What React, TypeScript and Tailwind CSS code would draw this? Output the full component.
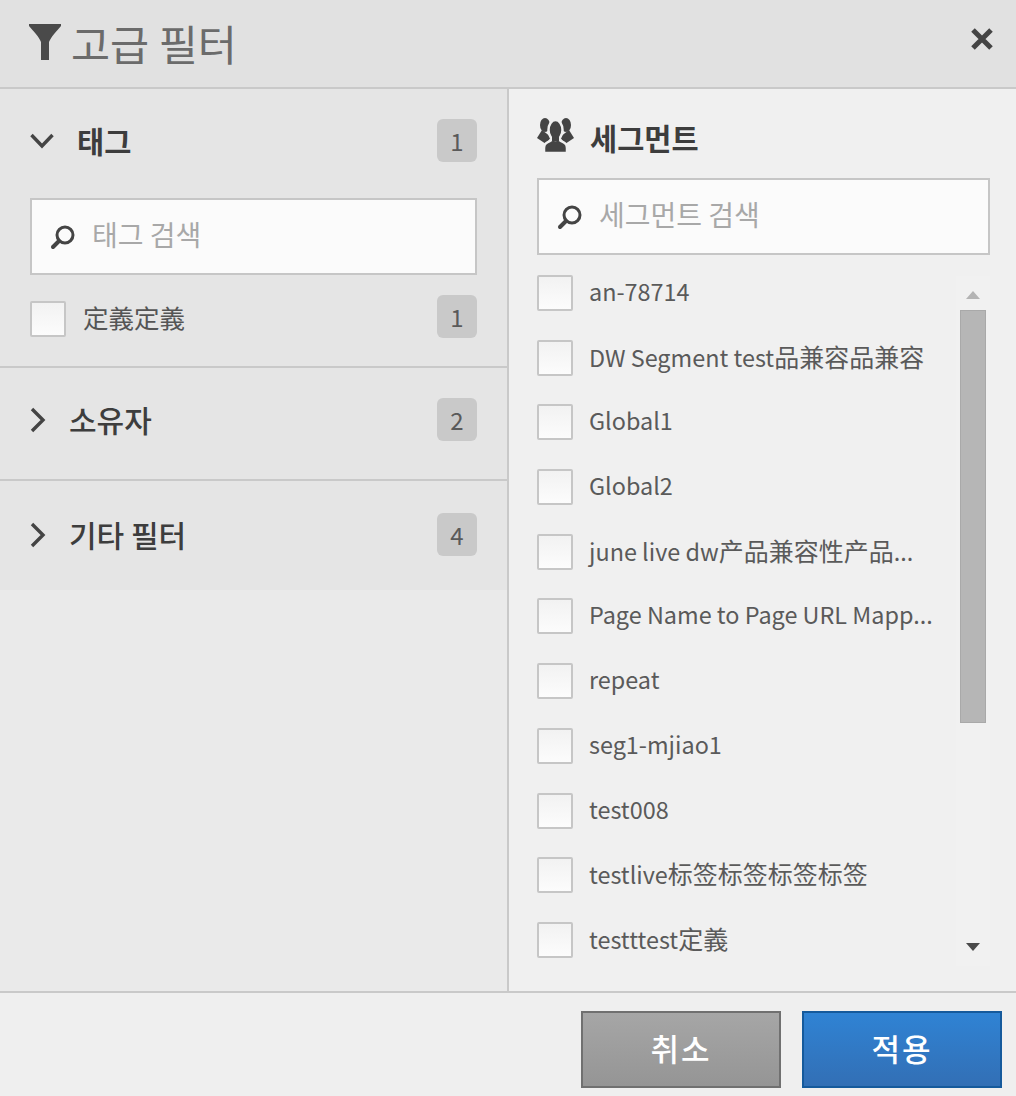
import React from "react";

const FONT = "[font-family:'Noto_Sans_CJK_KR','Noto_Sans_CJK_SC',sans-serif]";

const SEGMENTS = [
  "an-78714",
  "DW Segment test品兼容品兼容",
  "Global1",
  "Global2",
  "june live dw产品兼容性产品...",
  "Page Name to Page URL Mapp...",
  "repeat",
  "seg1-mjiao1",
  "test008",
  "testlive标签标签标签标签",
  "testttest定義",
];

function Checkbox() {
  return <div className="w-[36px] h-[36px] shrink-0 border-2 border-[#c6c6c6] rounded-[2px] bg-gradient-to-b from-[#f2f2f2] to-[#fcfcfc]" />;
}

function Badge({ n }: { n: number }) {
  return (
    <div className="w-[40px] h-[43px] rounded-[6px] bg-[#c9c9c9] flex items-center justify-center text-[24px] leading-none text-[#5a5a5a]">
      {n}
    </div>
  );
}

function SearchIcon() {
  return (
    <svg width="26" height="26" viewBox="0 0 26 26" className="shrink-0" fill="none">
      <circle cx="15" cy="11" r="8" stroke="#444" strokeWidth="3" />
      <path d="M9 17 L3 23" stroke="#444" strokeWidth="4" strokeLinecap="round" />
    </svg>
  );
}

function Search({ placeholder, className }: { placeholder: string; className: string }) {
  return (
    <div className={`h-[77px] border-2 border-[#c6c6c6] bg-[#fbfbfb] flex items-center pl-[18px] ${className}`}>
      <SearchIcon />
      <span className="ml-[16px] text-[28px] leading-none text-[#a8a8a8] -mt-[5px]">{placeholder}</span>
    </div>
  );
}

function ChevronR() {
  return (
    <svg width="16" height="26" viewBox="0 0 16 26" fill="none" className="shrink-0">
      <path d="M2 2 L13 13 L2 24" stroke="#444" strokeWidth="3.4" />
    </svg>
  );
}

function Section({ title, n, height, border, top }: { title: string; n: number; height: string; border: string; top: string }) {
  return (
    <div className={`${height} ${border} ${top} bg-[#e5e5e5] flex items-start justify-between pl-[30px] pr-[30px]`}>
      <div className="flex items-center h-[43px]">
        <ChevronR />
        <span className="ml-[23px] text-[30px] leading-none font-medium text-[#3d3d3d] -mt-[1px]">{title}</span>
      </div>
      <Badge n={n} />
    </div>
  );
}

function Label({ text }: { text: string }) {
  const parts = text.split(/([\u4e00-\u9fff]+)/).filter(Boolean);
  return (
    <span className="ml-[16px] text-[23.4px] leading-[36px] text-[#5a5a5a] whitespace-nowrap -mt-[2px]">
      {parts.map((p, i) =>
        /[\u4e00-\u9fff]/.test(p) ? (
          <span key={i} className="text-[25px] [font-family:'Noto_Sans_CJK_SC',sans-serif]">{p}</span>
        ) : (
          <span key={i}>{p}</span>
        )
      )}
    </span>
  );
}

export default function App() {
  return (
    <div className={`w-[1016px] h-[1096px] overflow-hidden flex flex-col bg-[#efefef] ${FONT}`}>
      <header className="h-[89px] shrink-0 bg-[#e1e1e1] border-b-2 border-[#c9c9c9] flex items-center justify-between pl-[29px] pr-[22px]">
        <div className="flex items-center">
          <svg width="32" height="38" viewBox="0 0 32 38" className="-mt-[4px]">
            <path d="M0 1 H32 V3 C26 10 22 14 20 19 V37 H12 V19 C10 14 6 10 0 3 Z" fill="#4a4a4a" />
          </svg>
          <span className="ml-[10px] text-[42.5px] leading-none text-[#6b6b6b] -mt-[1px]">고급 필터</span>
        </div>
        <svg width="24" height="24" viewBox="0 0 24 24" className="-mt-[9px]">
          <path d="M3 3 L21 21 M21 3 L3 21" stroke="#444" strokeWidth="5" />
        </svg>
      </header>

      <main className="flex-1 flex min-h-0">
        <aside className="w-[509px] shrink-0 bg-[#eaeaea] border-r-2 border-[#c9c9c9] flex flex-col">
          <div className="h-[279px] bg-[#e5e5e5] border-b-2 border-[#c9c9c9] px-[30px] pt-[30px]">
            <div className="flex items-start justify-between">
              <div className="flex items-center h-[43px]">
                <svg width="24" height="16" viewBox="0 0 24 16" fill="none" className="shrink-0">
                  <path d="M1.5 2 L12 13 L22.5 2" stroke="#444" strokeWidth="3.4" />
                </svg>
                <span className="ml-[23px] text-[29.5px] leading-none font-bold text-[#3d3d3d]">태그</span>
              </div>
              <Badge n={1} />
            </div>
            <Search placeholder="태그 검색" className="mt-[36px]" />
            <div className="mt-[20px] flex items-start justify-between">
              <div className="flex items-center mt-[6px]">
                <Checkbox />
                <span className="ml-[17px] text-[25.5px] leading-none text-[#555] -mt-[5px] [font-family:'Noto_Sans_CJK_SC',sans-serif]">定義定義</span>
              </div>
              <Badge n={1} />
            </div>
          </div>
          <Section title="소유자" n={2} height="h-[113px]" border="border-b-2 border-[#c9c9c9]" top="pt-[30px]" />
          <Section title="기타 필터" n={4} height="h-[109px]" border="" top="pt-[32px]" />
        </aside>

        <section className="flex-1 min-w-0 bg-[#f0f0f0] pt-[29px] pl-[28px] pr-[26px] flex flex-col">
          <div className="flex items-center h-[40px]">
            <svg width="37" height="36" viewBox="0 0 37 36" className="-mt-[7px] shrink-0" fill="#444">
              <ellipse cx="8" cy="8" rx="5" ry="7" />
              <ellipse cx="29" cy="8" rx="5" ry="7" />
              <path d="M5 13 L0 21 L9 27 L14 20 Z" />
              <path d="M32 13 L37 21 L28 27 L23 20 Z" />
              <path d="M15 20 V23 C11 25 7 26 7 31 V36 H30 V31 C30 26 26 25 22 23 V20 Z" stroke="#f0f0f0" strokeWidth="2.5" />
              <ellipse cx="18.5" cy="13" rx="7" ry="10" stroke="#f0f0f0" strokeWidth="2.5" />
              <path d="M15 18 H22 V24 H15 Z" />
            </svg>
            <span className="ml-[16px] text-[29.5px] leading-none font-bold text-[#3d3d3d] -mt-[1px]">세그먼트</span>
          </div>
          <Search placeholder="세그먼트 검색" className="mt-[20px] w-[453px]" />
          <div className="flex mt-[10px] flex-1 min-h-0">
            <ul className="flex-1 min-w-0 flex flex-col">
              {SEGMENTS.map((s) => (
                <li key={s} className="h-[64.7px] flex items-start shrink-0 pt-[10px]">
                  <Checkbox />
                  <Label text={s} />
                </li>
              ))}
            </ul>
            <div className="w-[34px] h-[690px] mt-[11px] bg-[#f1f1f1] flex flex-col items-center shrink-0">
              <div className="mt-[15px] w-0 h-0 border-x-[7px] border-x-transparent border-b-[8px] border-b-[#b4b4b4]" />
              <div className="mt-[11px] w-[26px] h-[413px] bg-[#b6b6b6] border border-[#a9a9a9]" />
              <div className="mt-[220px] w-0 h-0 border-x-[7px] border-x-transparent border-t-[8px] border-t-[#4a4a4a]" />
            </div>
          </div>
        </section>
      </main>

      <footer className="h-[105px] shrink-0 bg-[#efefef] border-t-2 border-[#c9c9c9] flex items-start justify-end gap-[21px] pt-[18px] pr-[14px]">
        <button className="w-[200px] h-[77px] border-2 border-[#707070] bg-gradient-to-b from-[#a6a6a6] to-[#959595] text-white text-[31px] font-medium leading-none flex items-center justify-center pb-[4px] tracking-[2px]">
          취소
        </button>
        <button className="w-[200px] h-[77px] border-2 border-[#155a9c] bg-gradient-to-b from-[#2f83d4] to-[#326fb5] text-white text-[31px] font-medium leading-none flex items-center justify-center pb-[4px] tracking-[2px]">
          적용
        </button>
      </footer>
    </div>
  );
}
